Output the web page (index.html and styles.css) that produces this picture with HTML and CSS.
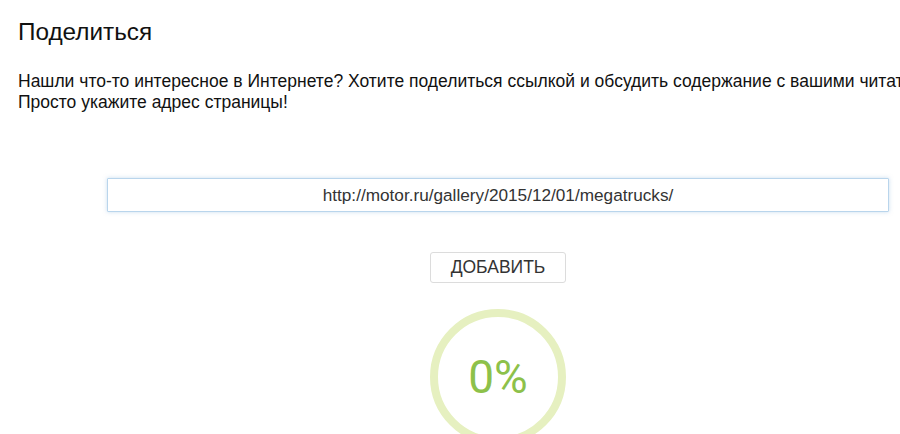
FILE: index.html
```html
<!DOCTYPE html>
<html lang="ru">
<head>
    <meta charset="UTF-8">
    <meta name="viewport" content="width=device-width, initial-scale=1.0">
    <title>Поделиться</title>
    <link rel="stylesheet" href="styles.css">
</head>
<body>

<div class="page">
    <h1>Поделиться</h1>
    <p class="intro">Нашли что-то интересное в Интернете? Хотите поделиться ссылкой и обсудить содержание с вашими читателями?<br>Просто укажите адрес страницы!</p>

    <div class="share-form">
        <input class="url-input" type="text" value="http://motor.ru/gallery/2015/12/01/megatrucks/">
        <button class="add-btn">ДОБАВИТЬ</button>

        <!-- progress of loading the page -->
        <div class="progress">
            <svg class="ring" width="136" height="136" viewBox="0 0 136 136">
                <circle cx="68" cy="68" r="64" fill="none" stroke="#e6f0c0" stroke-width="8"/>
            </svg>
            <span class="percent">0%</span>
        </div>
    </div>
</div>

</body>
</html>
```

FILE: styles.css
```css
html, body {
    overflow: hidden;
}
body {
    font-family: "Liberation Sans", Arial, sans-serif;
    margin: 0;
    color: #111;
}
.page {
    width: 960px;
    margin-left: 18px;
}
h1 {
    font-size: 24.3px;
    font-weight: normal;
    margin: 18px 0 0;
    line-height: 28px;
}
.intro {
    font-size: 17.5px;
    line-height: 21px;
    margin: 25px 0 0;
    white-space: nowrap;
}
.share-form {
    display: flex;
    flex-direction: column;
    align-items: center;
    margin-top: 65px;
}
.url-input {
    box-sizing: border-box;
    width: 782px;
    height: 34px;
    border: 1px solid #b9d5ec;
    border-radius: 1px;
    box-shadow: 0 0 4px rgba(150, 190, 225, 0.5);
    font-family: "Liberation Sans", Arial, sans-serif;
    font-size: 17.2px;
    color: #333;
    text-align: center;
    outline: none;
}
.add-btn {
    margin-top: 40px;
    width: 136px;
    height: 31px;
    background-color: #fff;
    border: 1px solid #dcdcdc;
    border-radius: 3px;
    font-family: "Liberation Sans", Arial, sans-serif;
    font-size: 17.5px;
    color: #333;
    cursor: pointer;
}
.progress {
    position: relative;
    margin-top: 26px;
    width: 136px;
    height: 136px;
}
.ring {
    display: block;
}
.percent {
    position: absolute;
    left: 0;
    right: 0;
    top: 0;
    bottom: 0;
    display: flex;
    align-items: center;
    justify-content: center;
    font-family: Roboto, sans-serif;
    font-size: 46px;
    color: #8dc14a;
}
```
